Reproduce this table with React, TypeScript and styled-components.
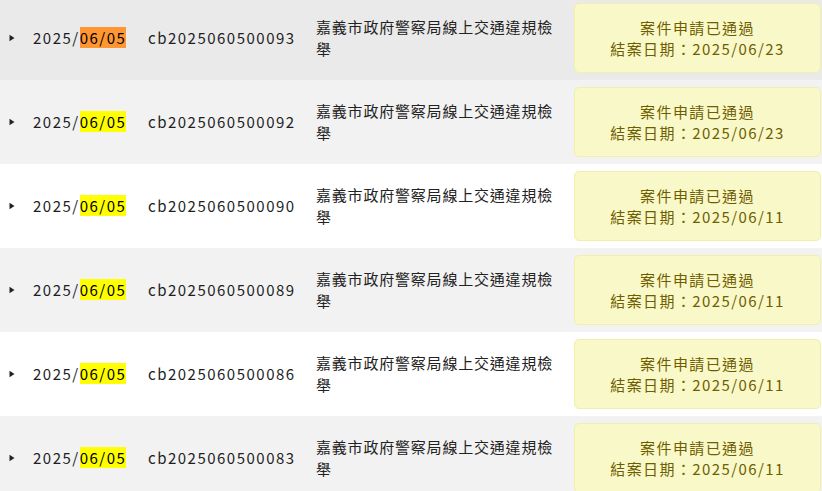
import React from "react";
import styled, { createGlobalStyle } from "styled-components";

const Global = createGlobalStyle`
  html, body { margin: 0; padding: 0; background: #ffffff; overflow: hidden; }
  body { font-family: "Noto Sans CJK TC", "Noto Sans", sans-serif; color: #222; }
`;

const List = styled.div`
  display: flex;
  flex-direction: column;
  margin-top: -4px;
  width: 822px;
`;

const Row = styled.div<{ $bg: string }>`
  display: grid;
  grid-template-columns: 33px 115px 168px 258px 247px;
  align-items: center;
  height: 84px;
  background: ${(p) => p.$bg};
`;

const Caret = styled.div`
  display: flex;
  justify-content: center;
  padding-right: 9px;
  svg { display: block; }
`;

const Cell = styled.div`
  font-size: 15px;
  letter-spacing: 1.5px;
  line-height: 20px;
  color: #1e1e24;
`;

const Title = styled(Cell)`
  letter-spacing: 0.8px;
  line-height: 22px;
  padding-right: 8px;
  color: #222;
`;

const Mark = styled.span<{ $active?: boolean }>`
  background: ${(p) => (p.$active ? "#ff9632" : "#ffff00")};
  color: #000;
`;

const Status = styled.div`
  height: 70px;
  box-sizing: border-box;
  border: 1px solid #f1efa8;
  border-radius: 5px;
  background: #f9f8c9;
  color: #6f5e00;
  display: flex;
  flex-direction: column;
  align-items: center;
  justify-content: center;
  font-size: 15px;
  letter-spacing: 1.4px;
  line-height: 21px;
`;

const rows = [
  { id: "cb2025060500093", end: "2025/06/23" },
  { id: "cb2025060500092", end: "2025/06/23" },
  { id: "cb2025060500090", end: "2025/06/11" },
  { id: "cb2025060500089", end: "2025/06/11" },
  { id: "cb2025060500086", end: "2025/06/11" },
  { id: "cb2025060500083", end: "2025/06/11" },
];

const Arrow = () => (
  <svg width="6" height="8" viewBox="0 0 6 8">
    <path d="M0.5 0.8 L5.5 4 L0.5 7.2 Z" fill="#222" />
  </svg>
);

export default function App() {
  return (
    <>
      <Global />
      <List>
        {rows.map((r, i) => (
          <Row key={r.id} $bg={i === 0 ? "#eaeaea" : i % 2 === 1 ? "#f2f2f2" : "#ffffff"}>
            <Caret>
              <Arrow />
            </Caret>
            <Cell>
              2025/<Mark $active={i === 0}>06/05</Mark>
            </Cell>
            <Cell>{r.id}</Cell>
            <Title>嘉義市政府警察局線上交通違規檢舉</Title>
            <Status>
              <div>案件申請已通過</div>
              <div>結案日期：{r.end}</div>
            </Status>
          </Row>
        ))}
      </List>
    </>
  );
}
